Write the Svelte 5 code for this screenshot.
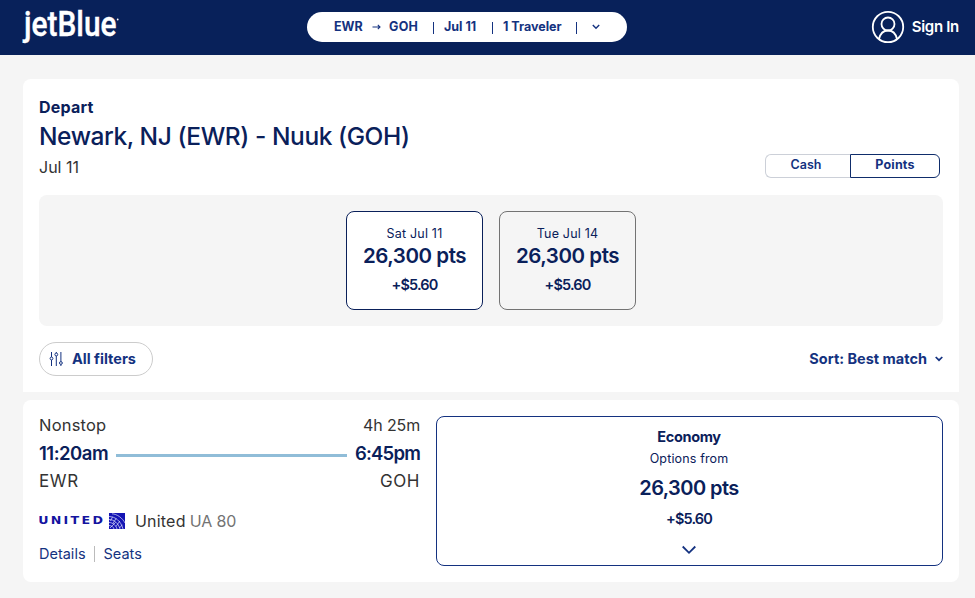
<script lang="ts">
  type FareDate = { label: string; points: string; fees: string };

  const fareDates: FareDate[] = [
    { label: 'Sat Jul 11', points: '26,300 pts', fees: '+$5.60' },
    { label: 'Tue Jul 14', points: '26,300 pts', fees: '+$5.60' },
  ];

  let selectedDate = $state(0);
  let currency = $state<'cash' | 'points'>('points');
</script>

<header class="topbar">
  <a class="logo" href="#home" aria-label="jetBlue">
    <svg width="98" height="50" viewBox="0 0 98 50">
      <text x="2" y="34.3" textLength="92.5" lengthAdjust="spacingAndGlyphs">jetBlue</text>
      <circle cx="95.7" cy="17.5" r="0.9" />
    </svg>
  </a>

  <button class="trip">
    <span class="trip-from">EWR</span>
    <svg class="trip-arrow" width="9" height="8" viewBox="0 0 9 8"><path d="M0.5 4H8M5.8 1.9L8 4L5.8 6.1" /></svg>
    <span class="trip-to">GOH</span>
    <i class="bar"></i>
    <span class="trip-date">Jul 11</span>
    <i class="bar"></i>
    <span class="trip-pax">1 Traveler</span>
    <i class="bar"></i>
    <svg class="trip-chev" width="8" height="6" viewBox="0 0 8 6"><path d="M0.8 1L4 4.3L7.2 1" /></svg>
  </button>

  <button class="signin">
    <svg width="34" height="34" viewBox="0 0 34 34">
      <circle cx="17" cy="17" r="15.2" />
      <circle cx="17" cy="14" r="6.5" />
      <path d="M8 29C9.2 23.8 12.6 20.5 17 20.5S24.8 23.8 26 29" />
    </svg>
    <span>Sign In</span>
  </button>
</header>

<main>
  <section class="panel search">
    <div class="heading">
      <div>
        <div class="depart"><span>Depart</span></div>
        <h1><span>Newark, NJ (EWR) - Nuuk (GOH)</span></h1>
        <div class="date"><span>Jul 11</span></div>
      </div>
      <div class="toggle">
        <button class="cash" class:active={currency === 'cash'} onclick={() => (currency = 'cash')}>Cash</button>
        <button class="points" class:active={currency === 'points'} onclick={() => (currency = 'points')}>Points</button>
      </div>
    </div>

    <div class="strip">
      {#each fareDates as fare, i}
        <button class="fare-date" class:selected={selectedDate === i} onclick={() => (selectedDate = i)}>
          <span class="fd-label">{fare.label}</span>
          <span class="fd-points">{fare.points}</span>
          <span class="fees">{fare.fees}</span>
        </button>
      {/each}
    </div>

    <div class="controls">
      <button class="filters">
        <svg width="14" height="16" viewBox="0 0 14 16">
          <path d="M2.5 1V6M2.5 9V15M7.3 1V2M7.3 5V15M11.9 1V10.5M11.9 13.5V15" />
          <circle cx="2.5" cy="7.5" r="1.4" />
          <circle cx="7.3" cy="3.5" r="1.4" />
          <circle cx="11.9" cy="12" r="1.4" />
        </svg>
        <span>All filters</span>
      </button>
      <button class="sort">
        <span>Sort: Best match</span>
        <svg width="8" height="6" viewBox="0 0 8 6"><path d="M0.7 1L4 4.2L7.3 1" /></svg>
      </button>
    </div>
  </section>

  <section class="panel flight">
    <div class="itinerary">
      <div class="row muted">
        <span class="nonstop">Nonstop</span>
        <span class="duration">4h 25m</span>
      </div>
      <div class="row times">
        <span class="t-depart">11:20am</span>
        <i class="line"></i>
        <span class="t-arrive">6:45pm</span>
      </div>
      <div class="row muted">
        <span class="airport">EWR</span>
        <span class="airport">GOH</span>
      </div>
      <div class="carrier">
        <svg width="88" height="16" viewBox="0 0 88 16">
          <text x="-0.8" y="11.4" textLength="67" lengthAdjust="spacingAndGlyphs">UNITED</text>
          <rect x="70" y="0" width="16" height="16" />
          <g>
            <path d="M70 3.5C76 3.5 82 8 84 16M70 6.5C75 6.5 79.5 10.5 81 16M70 9.5C74 9.5 77 12.5 78 16M70 12.5C72.5 12.5 74.5 14 75 16" />
            <path d="M73 0.8C78 1 83.5 5 86 10M71 15L76.5 9.5M73.5 3.8L71.5 8M77.2 5.2L74 10.5M80.8 8L77 13.5M83.3 11.8L80.5 15" />
          </g>
        </svg>
        <span class="airline">United</span>
        <span class="number">UA 80</span>
      </div>
      <div class="links">
        <a class="l-details" href="#details">Details</a>
        <i></i>
        <a class="l-seats" href="#seats">Seats</a>
      </div>
    </div>

    <button class="fare">
      <span class="cabin">Economy</span>
      <span class="from">Options from</span>
      <span class="price">26,300 pts</span>
      <span class="fees">+$5.60</span>
      <svg width="16" height="10" viewBox="0 0 16 10"><path d="M1.7 1.5L8 7.8L14.3 1.5" /></svg>
    </button>
  </section>
</main>

<style>
  :global(body) {
    background: #f5f5f5;
    font-family: Inter, "Liberation Sans", sans-serif;
    color: #333;
  }
  button {
    font-family: inherit;
    background: none;
    border: none;
    padding: 0;
    margin: 0;
    color: inherit;
    cursor: pointer;
    box-sizing: border-box;
  }
  a { text-decoration: none; }
  svg { display: block; flex-shrink: 0; fill: none; }
  span, a { white-space: nowrap; }

  .topbar {
    height: 55px;
    box-sizing: border-box;
    padding: 0 16px 2px 22px;
    background: #08215a;
    display: grid;
    grid-template-columns: 285px 320px 1fr;
    align-items: center;
  }
  .logo svg { fill: #fff; overflow: visible; }
  .logo text { font: 500 34.5px Roboto, sans-serif; stroke: #fff; stroke-width: 0.4; }

  .trip {
    height: 30px;
    border-radius: 15px;
    background: #fff;
    color: #143280;
    display: flex;
    align-items: center;
    padding-left: 27px;
    font-size: 12.5px;
    font-weight: 700;
  }
  .trip > * { flex-shrink: 0; }
  .trip svg { stroke: #143280; stroke-width: 1.1; }
  .trip .trip-chev { stroke-width: 1.4; margin-left: 15px; }
  .trip-from { width: 38px; text-align: left; }
  .trip-to { width: 44px; text-align: left; margin-left: 8px; letter-spacing: 0.3px; }
  .bar { width: 1px; height: 12px; background: #143280; margin-top: 2px; }
  .trip-date { width: 58px; text-align: left; box-sizing: border-box; padding-left: 10px; }
  .trip-pax { width: 83px; text-align: left; box-sizing: border-box; padding-left: 10px; }

  .signin {
    justify-self: end;
    display: flex;
    align-items: center;
    gap: 7px;
    color: #fff;
    font-size: 15px;
    font-weight: 600;
    letter-spacing: -0.3px;
  }
  .signin svg { stroke: #fff; stroke-width: 1.8; }

  main {
    padding: 24px 16px 0 23px;
    display: flex;
    flex-direction: column;
    gap: 8px;
    height: 519px;
  }
  .panel {
    background: #fff;
    box-sizing: border-box;
    padding: 16px;
  }

  .search { height: 313px; border-radius: 8px 8px 0 0; }
  .heading {
    display: flex;
    justify-content: space-between;
    align-items: flex-end;
    height: 100px;
  }
  .heading > div:first-child { align-self: flex-start; }
  .depart {
    font-size: 16px;
    line-height: 24px;
    font-weight: 700;
    letter-spacing: 0.2px;
    color: #0a205a;
  }
  h1 {
    margin: 0;
    font-size: 24.5px;
    line-height: 34px;
    font-weight: 500;
    letter-spacing: -0.42px;
    color: #0a205a;
  }
  .date { font-size: 16px; line-height: 28px; }

  .toggle { display: flex; margin: 0 3px 17px 0; }
  .toggle button {
    height: 24px;
    font-size: 12.5px;
    font-weight: 600;
    color: #143280;
    border: 1px solid #ccd0d8;
    padding-bottom: 3px;
  }
  .toggle .cash { width: 85px; border-radius: 6px 0 0 6px; border-right: none; padding-right: 4px; }
  .toggle .points { width: 90px; border-radius: 0 6px 6px 0; letter-spacing: 0.2px; }
  .toggle .active { border-color: #0f2d6b; font-weight: 700; }

  .strip {
    height: 131px;
    border-radius: 8px;
    background: #f5f5f5;
    display: flex;
    justify-content: center;
    align-items: center;
    gap: 16px;
  }
  .fare-date {
    width: 137px;
    height: 99px;
    border: 1px solid #737373;
    border-radius: 8px;
    color: #0a205a;
    display: flex;
    flex-direction: column;
    align-items: center;
    padding-top: 13px;
  }
  .fare-date.selected { background: #fff; border-color: #0a205a; }
  .fd-label { font-size: 12.5px; line-height: 18px; letter-spacing: 0.2px; }
  .fd-points { font-size: 20.5px; line-height: 26px; font-weight: 600; letter-spacing: -0.45px; }
  .fees { font-size: 14.5px; line-height: 32px; font-weight: 600; letter-spacing: -0.85px; }

  .controls {
    display: flex;
    justify-content: space-between;
    align-items: center;
    height: 34px;
    margin-top: 16px;
    color: #143280;
  }
  .controls svg { stroke: #143280; stroke-width: 1; }
  .controls span { padding-bottom: 2px; }
  .filters {
    height: 34px;
    width: 114px;
    border: 1px solid #ccc;
    border-radius: 17px;
    display: flex;
    align-items: center;
    gap: 9px;
    padding-left: 9px;
    font-size: 14.5px;
    font-weight: 700;
  }
  .sort {
    display: flex;
    align-items: center;
    gap: 8px;
    font-size: 14.5px;
    font-weight: 700;
  }
  .controls .sort svg { stroke-width: 1.7; }

  .flight {
    height: 182px;
    border-radius: 8px;
    display: grid;
    grid-template-columns: 381px 507px;
    gap: 16px;
  }
  .row {
    display: flex;
    justify-content: space-between;
    align-items: center;
  }
  .muted { font-size: 16px; line-height: 18px; }
  .nonstop { font-size: 16.5px; letter-spacing: 0.2px; }
  .duration { letter-spacing: -0.15px; }
  .airport { font-size: 17px; letter-spacing: 0.6px; }
  .times {
    height: 38px;
    color: #0a205a;
    font-size: 18.5px;
    font-weight: 600;
    gap: 8px;
  }
  .t-depart { letter-spacing: -0.5px; }
  .t-arrive { letter-spacing: -0.8px; }
  .line { flex: 1; height: 3px; background: #90bdd8; margin-top: 5px; }

  .carrier { display: flex; align-items: center; margin-top: 22px; height: 18px; font-size: 16px; }
  .carrier text { font: 700 10px "DejaVu Sans", sans-serif; letter-spacing: 1.8px; fill: #1414a0; }
  .carrier rect { fill: #1414b4; }
  .carrier g { stroke: #dfe2fb; stroke-width: 0.7; }
  .airline { margin-left: 8px; letter-spacing: 0.2px; }
  .number { margin-left: 4px; color: #737373; letter-spacing: -0.1px; }

  .links { display: flex; align-items: center; margin-top: 14px; height: 18px; font-size: 14.5px; }
  .links a { color: #143280; }
  .links i { width: 1px; height: 16px; background: #bbb; margin: 2px 9px 0 8px; }

  .fare {
    height: 150px;
    border: 1px solid #143280;
    border-radius: 8px;
    color: #0a205a;
    display: flex;
    flex-direction: column;
    align-items: center;
    padding: 9px 1px 0 0;
  }
  .cabin { font-size: 14.5px; line-height: 21px; font-weight: 700; letter-spacing: -0.35px; }
  .from { font-size: 12.5px; line-height: 24px; letter-spacing: 0.15px; }
  .price { font-size: 20px; line-height: 35px; font-weight: 600; letter-spacing: -0.55px; }
  .fare .fees { line-height: 26px; }
  .fare svg { margin-top: 13px; stroke: #143280; stroke-width: 1.8; }
</style>
